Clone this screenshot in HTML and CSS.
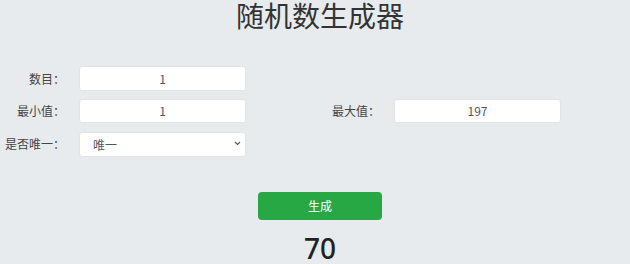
FILE: index.html
```html
<!DOCTYPE html>
<html lang="zh-CN">
<head>
<meta charset="utf-8">
<title>随机数生成器</title>
<link rel="stylesheet" href="styles.css">
</head>
<body>
<div class="page">
  <h1 class="title">随机数生成器</h1>
  <form class="form">
    <label class="label">数目：</label>
    <input class="field" type="text" value="1">
    <span class="spacer"></span>
    <span class="spacer"></span>

    <label class="label">最小值：</label>
    <input class="field" type="text" value="1">
    <label class="label">最大值：</label>
    <input class="field" type="text" value="197">

    <label class="label">是否唯一：</label>
    <div class="select-wrap">
      <select class="field select">
        <option>唯一</option>
        <option>不唯一</option>
      </select>
      <svg class="chevron" width="7" height="5" viewBox="0 0 7 5"><path d="M1 1 L3.5 3.5 L6 1" fill="none" stroke="#555" stroke-width="1.1"/></svg>
    </div>
  </form>
  <div class="actions">
    <button class="btn" type="button">生成</button>
  </div>
  <div class="result">70</div>
</div>
</body>
</html>
```
FILE: styles.css
```css
html, body {
  margin: 0;
  padding: 0;
  background: #e8ebee;
}
body {
  font-family: "Noto Sans CJK SC", "Noto Sans", sans-serif;
  color: #333;
}
.page {
  width: 630px;
}
.title {
  margin: 0;
  padding-left: 10px;
  text-align: center;
  font-size: 28px;
  font-weight: 400;
  line-height: 30px;
  color: #333;
}
.form {
  display: grid;
  grid-template-columns: 79px 167px 148px 167px;
  row-gap: 8px;
  margin-top: 36px;
}
.label {
  align-self: center;
  text-align: right;
  padding-right: 14px;
  font-size: 12px;
  color: #444;
  white-space: nowrap;
}
.field {
  box-sizing: border-box;
  height: 24.5px;
  width: 167px;
  margin: 0;
  border: 1px solid #e2e5e8;
  border-radius: 3px;
  background: #fff;
  font-family: "Noto Sans CJK SC", "Noto Sans", sans-serif;
  font-size: 12px;
  color: #555;
  text-align: center;
  padding: 0 8px;
  outline: none;
}
.select-wrap {
  position: relative;
  width: 167px;
}
.select {
  -webkit-appearance: none;
  appearance: none;
  text-align: left;
  padding-left: 13px;
}
.chevron {
  position: absolute;
  right: 5px;
  top: 10px;
}
.actions {
  display: flex;
  justify-content: center;
  padding-left: 10px;
  margin-top: 35px;
}
.btn {
  width: 124px;
  height: 28px;
  border: none;
  border-radius: 4px;
  background: #28a745;
  color: #fff;
  font-family: "Noto Sans CJK SC", "Noto Sans", sans-serif;
  font-size: 12px;
  padding: 0;
}
.result {
  text-align: center;
  padding-left: 10px;
  margin-top: 13px;
  font-family: "Noto Sans", sans-serif;
  font-size: 28px;
  font-weight: 500;
  line-height: 30px;
  color: #222;
}
```
